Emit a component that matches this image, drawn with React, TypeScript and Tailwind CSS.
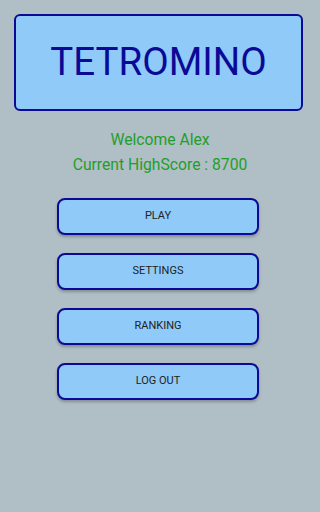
const buttons = ["PLAY", "SETTINGS", "RANKING", "LOG OUT"];

export default function App() {
  return (
    <div
      className="h-[512px] w-full bg-[#b0bec5] pt-[14px]"
      style={{ fontFamily: "Roboto, 'Noto Sans', sans-serif" }}
    >
      {/* Title */}
      <div className="ml-[14px] flex h-[97px] w-[289px] items-center justify-center rounded-[6px] border-2 border-[#0a0a96] bg-[#90caf9]">
        <span className="text-[38.5px] leading-none text-[#0a0a96]">TETROMINO</span>
      </div>

      {/* Welcome */}
      <div className="mt-[16px] flex flex-col items-center text-[15.7px] leading-[25px] text-[#1f9e2a]">
        <span>Welcome Alex</span>
        <span>Current HighScore : 8700</span>
      </div>

      {/* Menu buttons */}
      <div className="mt-[21px] flex flex-col gap-[18px]">
        {buttons.map((label) => (
          <button
            key={label}
            className="ml-[57px] flex h-[37px] w-[202px] items-center justify-center rounded-[8px] border-2 border-[#0a0a96] bg-[#90caf9] text-[11px] font-normal text-[#222] shadow-[0_2px_3px_rgba(0,0,0,0.25)]"
          >
            {label}
          </button>
        ))}
      </div>
    </div>
  );
}
